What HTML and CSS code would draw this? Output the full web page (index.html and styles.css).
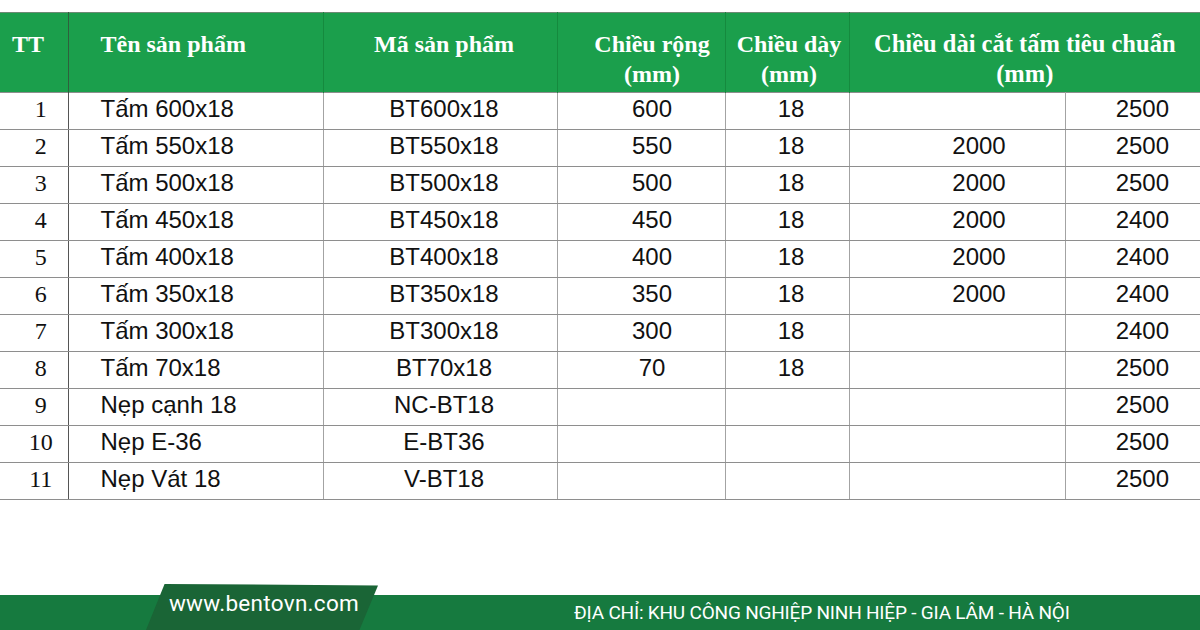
FILE: index.html
```html
<!DOCTYPE html>
<html lang="vi">
<head>
<meta charset="utf-8">
<title>Bảng quy cách sản phẩm</title>
<link rel="stylesheet" href="styles.css">
</head>
<body>
<div class="page">
  <table class="spec">
    <colgroup>
      <col class="c-tt"><col class="c-name"><col class="c-code"><col class="c-w"><col class="c-d"><col class="c-l1"><col class="c-l2">
    </colgroup>
    <thead>
      <tr>
        <th class="h-tt">TT</th>
        <th class="h-name">Tên sản phẩm</th>
        <th class="h-code">Mã sản phẩm</th>
        <th class="h-w">Chiều rộng<br>(mm)</th>
        <th class="h-d">Chiều dày<br>(mm)</th>
        <th class="h-l" colspan="2">Chiều dài cắt tấm tiêu chuẩn<br>(mm)</th>
      </tr>
    </thead>
    <tbody>
      <tr><td class="tt">1</td><td class="name">Tấm 600x18</td><td class="code">BT600x18</td><td class="w">600</td><td class="d">18</td><td class="l1"></td><td class="l2">2500</td></tr>
      <tr><td class="tt">2</td><td class="name">Tấm 550x18</td><td class="code">BT550x18</td><td class="w">550</td><td class="d">18</td><td class="l1">2000</td><td class="l2">2500</td></tr>
      <tr><td class="tt">3</td><td class="name">Tấm 500x18</td><td class="code">BT500x18</td><td class="w">500</td><td class="d">18</td><td class="l1">2000</td><td class="l2">2500</td></tr>
      <tr><td class="tt">4</td><td class="name">Tấm 450x18</td><td class="code">BT450x18</td><td class="w">450</td><td class="d">18</td><td class="l1">2000</td><td class="l2">2400</td></tr>
      <tr><td class="tt">5</td><td class="name">Tấm 400x18</td><td class="code">BT400x18</td><td class="w">400</td><td class="d">18</td><td class="l1">2000</td><td class="l2">2400</td></tr>
      <tr><td class="tt">6</td><td class="name">Tấm 350x18</td><td class="code">BT350x18</td><td class="w">350</td><td class="d">18</td><td class="l1">2000</td><td class="l2">2400</td></tr>
      <tr><td class="tt">7</td><td class="name">Tấm 300x18</td><td class="code">BT300x18</td><td class="w">300</td><td class="d">18</td><td class="l1"></td><td class="l2">2400</td></tr>
      <tr><td class="tt">8</td><td class="name">Tấm 70x18</td><td class="code">BT70x18</td><td class="w">70</td><td class="d">18</td><td class="l1"></td><td class="l2">2500</td></tr>
      <tr><td class="tt">9</td><td class="name">Nẹp cạnh 18</td><td class="code">NC-BT18</td><td class="w"></td><td class="d"></td><td class="l1"></td><td class="l2">2500</td></tr>
      <tr><td class="tt">10</td><td class="name">Nẹp E-36</td><td class="code">E-BT36</td><td class="w"></td><td class="d"></td><td class="l1"></td><td class="l2">2500</td></tr>
      <tr><td class="tt">11</td><td class="name">Nẹp Vát 18</td><td class="code">V-BT18</td><td class="w"></td><td class="d"></td><td class="l1"></td><td class="l2">2500</td></tr>
    </tbody>
  </table>

  <footer class="footer">
    <div class="site-tag"><span class="site">www.bentovn.com</span></div>
    <div class="band">
      <span class="address">ĐỊA CHỈ: KHU CÔNG NGHIỆP NINH HIỆP - GIA LÂM - HÀ NỘI</span>
    </div>
  </footer>
</div>
</body>
</html>
```

FILE: styles.css
```css
* { box-sizing: border-box; }

html, body {
  margin: 0;
  padding: 0;
  background: #ffffff;
}

.page {
  width: 1200px;
  height: 630px;
  padding-top: 12px;
  display: flex;
  flex-direction: column;
  overflow: hidden;
}

.spec {
  width: 1200px;
  table-layout: fixed;
  border-collapse: collapse;
  font-family: "Liberation Sans", Arial, sans-serif;
  color: #111111;
}

.c-tt { width: 68px; }
.c-name { width: 255px; }
.c-code { width: 234px; }
.c-w { width: 168px; }
.c-d { width: 124px; }
.c-l1 { width: 216px; }
.c-l2 { width: 135px; }

.spec thead tr { height: 80px; }

.spec th {
  background: #1b9f4c;
  color: #ffffff;
  font-family: "Liberation Serif", "Times New Roman", serif;
  font-weight: bold;
  font-size: 24px;
  line-height: 30px;
  vertical-align: top;
  padding: 16px 0 0 0;
  text-align: center;
  border-left: 1px solid #158a3e;
  border-right: 1px solid #158a3e;
  border-top: 1px solid #6c8a74;
  white-space: nowrap;
}

.spec th.h-tt { text-align: left; padding-left: 12px; border-left: none; border-right-color: #2f5f3d; }
.spec th.h-name { text-align: left; padding-left: 32px; }
.spec th.h-code { padding-left: 8px; }
.spec th.h-w { padding-left: 22px; }
.spec th.h-d { padding-left: 4px; }
.spec th.h-l { border-right: none; padding-left: 0; font-size: 24.5px; }

.spec tbody tr { height: 37px; }

.spec td {
  font-size: 24px;
  line-height: 28px;
  padding: 0 0 4px 0;
  vertical-align: middle;
  text-align: center;
  border: 1px solid #a3a3a3;
  border-top-color: #8e8e8e;
  border-bottom-color: #8e8e8e;
  white-space: nowrap;
}

.spec td.tt {
  font-family: "Liberation Serif", "Times New Roman", serif;
  padding-left: 14px;
  border-left: none;
  border-right-color: #555555;
}

.spec td.name { text-align: left; padding-left: 32px; }
.spec td.code { padding-left: 8px; }
.spec td.w { padding-left: 22px; }
.spec td.d { padding-left: 8px; }
.spec td.l1 { padding-left: 44px; }
.spec td.l2 { text-align: right; padding-right: 31px; border-right: none; }

/* footer */
.footer {
  margin-top: auto;
  position: relative;
  height: 46px;
  display: flex;
  flex-direction: column;
  justify-content: flex-end;
}

.band {
  height: 35px;
  background: #167a3f;
  display: flex;
  align-items: center;
  padding-left: 574px;
}

.address {
  font-family: Roboto, "Liberation Sans", sans-serif;
  font-size: 19px;
  color: #ffffff;
  letter-spacing: -0.2px;
  display: inline-block;
}

.site-tag {
  position: absolute;
  left: 146px;
  top: 0;
  width: 232px;
  height: 46px;
  background: #1a6536;
  clip-path: polygon(8% 0, 100% 3%, 92% 100%, 0 100%);
  display: flex;
  align-items: flex-start;
  justify-content: center;
  padding-top: 6px;
  padding-left: 4px;
  z-index: 1;
}

.site {
  font-family: Roboto, "Liberation Sans", sans-serif;
  font-size: 22.5px;
  color: #ffffff;
  letter-spacing: 0.3px;
}
```
